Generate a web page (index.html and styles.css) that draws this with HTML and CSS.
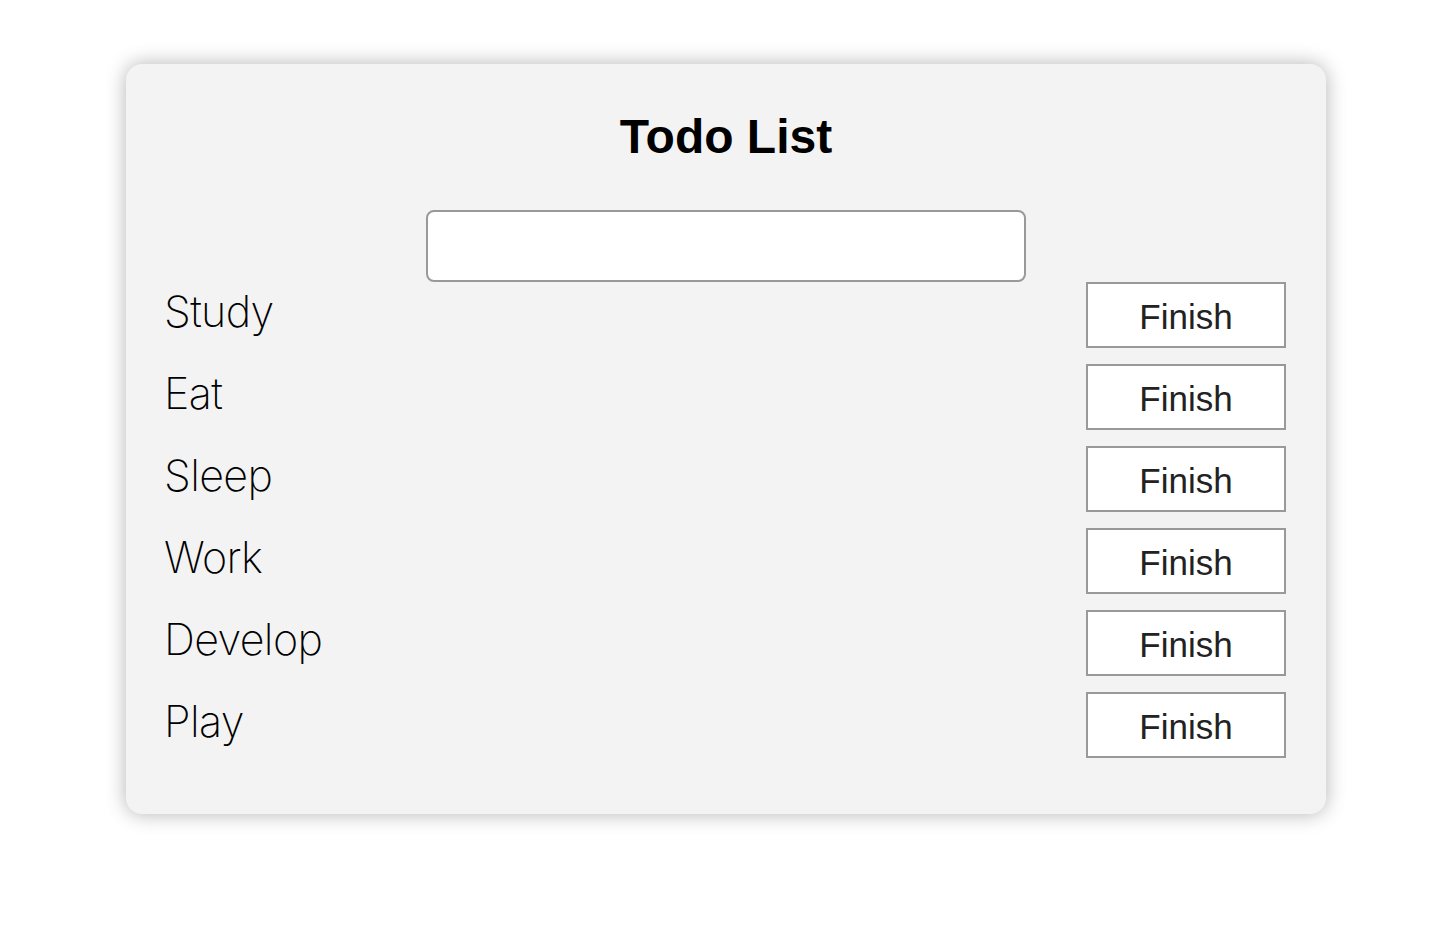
FILE: index.html
```html
<!DOCTYPE html>
<html lang="en">
<head>
<meta charset="utf-8">
<title>Todo List</title>
<link rel="stylesheet" href="styles.css">
</head>
<body>
<div class="card">
  <h1 class="title">Todo List</h1>
  <div class="input-row"><input class="todo-input" type="text"></div>
  <ul class="list">
    <li class="item"><span class="label">Study</span><button class="finish">Finish</button></li>
    <li class="item"><span class="label">Eat</span><button class="finish">Finish</button></li>
    <li class="item"><span class="label">Sleep</span><button class="finish">Finish</button></li>
    <li class="item"><span class="label">Work</span><button class="finish">Finish</button></li>
    <li class="item"><span class="label">Develop</span><button class="finish">Finish</button></li>
    <li class="item"><span class="label">Play</span><button class="finish">Finish</button></li>
  </ul>
</div>
</body>
</html>
```
FILE: styles.css
```css
html, body {
  margin: 0;
  padding: 0;
  background: #ffffff;
}
body {
  padding: 64px 0 80px 4px;
  font-family: "Liberation Sans", Arial, sans-serif;
}
.card {
  width: 1200px;
  box-sizing: border-box;
  margin: 0 auto;
  padding: 40px;
  background: #f3f3f3;
  border-radius: 16px;
  box-shadow: 0 0 20px rgba(0, 0, 0, 0.3);
}
.title {
  margin: 0 0 40px;
  font-size: 48px;
  line-height: 66px;
  font-weight: 700;
  text-align: center;
  color: #000;
}
.input-row {
  display: flex;
  justify-content: center;
}
.todo-input {
  width: 600px;
  height: 72px;
  box-sizing: border-box;
  border: 2px solid #999;
  border-radius: 8px;
  background: #fff;
  margin: 0;
  padding: 0 12px;
  font-size: 32px;
}
.list {
  list-style: none;
  margin: 0;
  padding: 0;
}
.item {
  display: flex;
  align-items: center;
  justify-content: space-between;
  height: 66px;
  margin-bottom: 16px;
}
.label {
  margin: 0 0 8px -2px;
  font-family: "Inter", "Liberation Sans", sans-serif;
  font-weight: 200;
  font-size: 43px;
  color: #000;
  letter-spacing: -0.6px;
}
.finish {
  width: 200px;
  height: 66px;
  box-sizing: border-box;
  border: 2px solid #999;
  background: #fff;
  margin: 0;
  padding: 4px 0 0;
  font-family: "Liberation Sans", Arial, sans-serif;
  font-size: 35px;
  color: #222;
}
```
